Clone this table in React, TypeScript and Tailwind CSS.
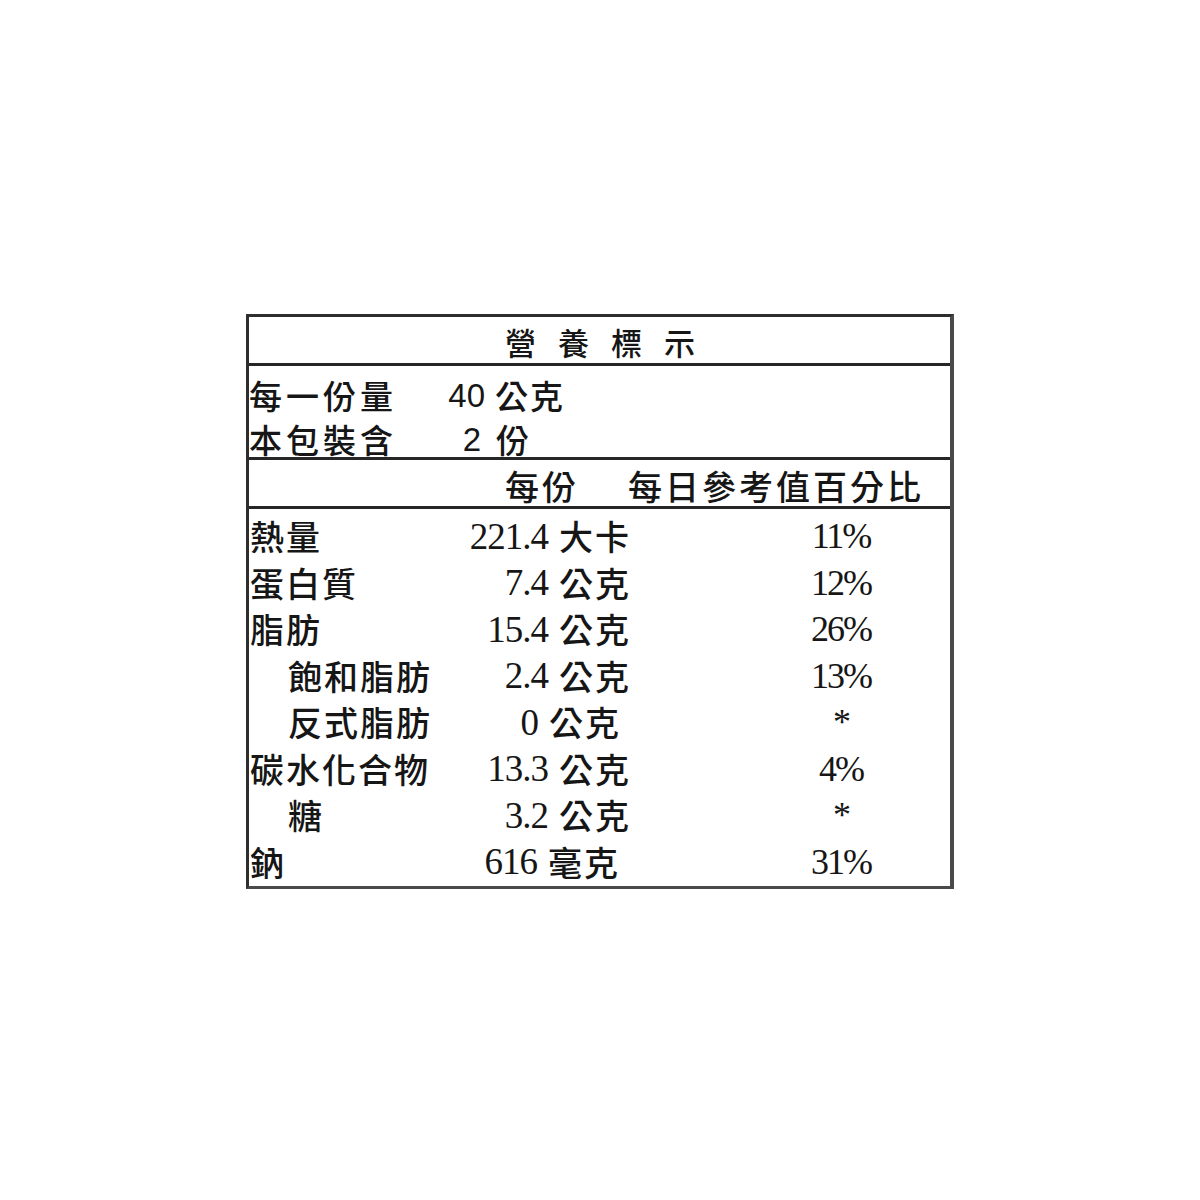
import React from 'react';

type Row = {
  label: string;
  indent?: boolean;
  amount: string;
  unit: string;
  percent: string;
  // nudges the amount group left for the odd rows in the scan
  shift?: string;
};

const rows: Row[] = [
  { label: '熱量', amount: '221.4', unit: '大卡', percent: '11%' },
  { label: '蛋白質', amount: '7.4', unit: '公克', percent: '12%' },
  { label: '脂肪', amount: '15.4', unit: '公克', percent: '26%' },
  { label: '飽和脂肪', indent: true, amount: '2.4', unit: '公克', percent: '13%' },
  { label: '反式脂肪', indent: true, amount: '0', unit: '公克', percent: '*', shift: 'pr-[10px]' },
  { label: '碳水化合物', amount: '13.3', unit: '公克', percent: '4%' },
  { label: '糖', indent: true, amount: '3.2', unit: '公克', percent: '*' },
  { label: '鈉', amount: '616', unit: '毫克', percent: '31%', shift: 'pr-[11px]' },
];

const cjk = "font-['Noto_Sans_CJK_TC','Noto_Sans_CJK_SC',sans-serif]";
const serif = "font-['Liberation_Serif','Noto_Sans_CJK_TC',serif]";
const sans = "font-['Liberation_Sans','Noto_Sans_CJK_TC',sans-serif]";

export default function App() {
  return (
    <div className="w-[1200px] h-[1200px] bg-white text-[#161616]">
      <div className="pt-[314px] pl-[246px]">
        <div className="w-[708px] border-l-[3px] border-t-[3px] border-r-[4px] border-b-[3px] border-l-[#2e2e2e] border-t-[#2e2e2e] border-r-[#4a4a4a] border-b-[#4a4a4a]">
          {/* Title */}
          <div className="h-[49px] border-b-[3px] border-[#262626] flex items-center pl-[256px] pt-[3px]">
            <span className={`${cjk} text-[31px] font-medium tracking-[22px] leading-none`}>營養標示</span>
          </div>

          {/* Serving */}
          <div className="h-[94px] border-b-[3px] border-[#262626] pt-[7px]">
            <div className="h-[44px] flex items-center">
              <span className={`${cjk} w-[160px] text-[33px] font-medium leading-none tracking-[4px]`}>每一份量</span>
              <span className={`${sans} w-[76px] text-right text-[33px] font-medium leading-none`}>40</span>
              <span className={`${cjk} ml-[10px] text-[33px] font-medium leading-none tracking-[2px]`}>公克</span>
            </div>
            <div className="h-[44px] flex items-center">
              <span className={`${cjk} w-[160px] text-[33px] font-medium leading-none tracking-[4px]`}>本包裝含</span>
              <span className={`${sans} w-[72px] text-right text-[33px] font-medium leading-none`}>2</span>
              <span className={`${cjk} ml-[15px] text-[33px] font-medium leading-none`}>份</span>
            </div>
          </div>

          {/* Column header */}
          <div className="h-[49px] border-b-[3px] border-[#262626] flex items-center pt-[5px]">
            <span className={`${cjk} ml-[256px] text-[34px] font-medium leading-none tracking-[3px]`}>每份</span>
            <span className={`${cjk} ml-[49px] text-[34px] font-medium leading-none tracking-[3px]`}>每日參考值百分比</span>
          </div>

          {/* Nutrients */}
          <div className="pt-[4px] pb-[1px]">
            {rows.map((row) => (
              <div key={row.label} className="h-[46.5px] flex items-center">
                <span
                  className={`${cjk} w-[190px] text-[34px] font-medium leading-none tracking-[2px] ${row.indent ? 'pl-[39px]' : 'pl-[1px]'}`}
                >
                  {row.label}
                </span>
                <div className={`w-[192px] flex items-center justify-end ${row.shift ?? ''}`}>
                  <span className={`${serif} text-[37px] leading-none tracking-[-1px]`}>{row.amount}</span>
                  <span className={`${cjk} ml-[11px] text-[34px] font-medium leading-none tracking-[2px]`}>{row.unit}</span>
                </div>
                <span className={`${serif} ml-[154px] w-[112px] text-center text-[36px] leading-none tracking-[-2px]`}>
                  {row.percent}
                </span>
              </div>
            ))}
          </div>
        </div>
      </div>
    </div>
  );
}
